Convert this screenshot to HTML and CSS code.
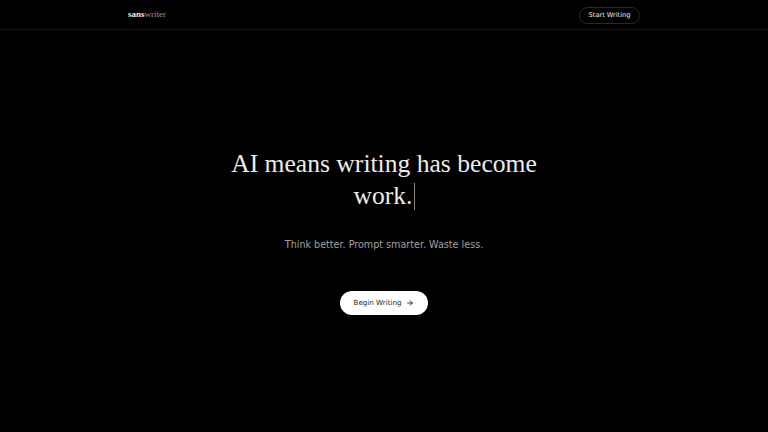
FILE: index.html
```html
<!DOCTYPE html>
<html lang="en">
<head>
<meta charset="utf-8">
<title>sanswriter</title>
<link rel="stylesheet" href="styles.css">
</head>
<body>
<div class="page">
  <header class="header">
    <div class="header-inner">
      <a class="logo" href="#"><span class="logo-bold">sans</span><span class="logo-light">writer</span></a>
      <a class="btn-outline" href="#">Start Writing</a>
    </div>
  </header>
  <main class="hero">
    <h1 class="headline">AI means writing has become work.<span class="cursor"></span></h1>
    <p class="subtitle">Think better. Prompt smarter. Waste less.</p>
    <a class="btn-primary" href="#">Begin Writing
      <svg class="arrow" viewBox="0 0 24 24" width="8" height="8" fill="none" stroke="currentColor" stroke-width="2.6" stroke-linecap="round" stroke-linejoin="round"><path d="M5 12h14"/><path d="M12 5l7 7-7 7"/></svg>
    </a>
  </main>
</div>
</body>
</html>
```
FILE: styles.css
```css
* { box-sizing: border-box; }
html, body { margin: 0; padding: 0; background: #000; }
body { font-family: "DejaVu Sans", sans-serif; color: #e8e8e8; }
a { text-decoration: none; }
.page { height: 432px; display: flex; flex-direction: column; }
.header { height: 30px; border-bottom: 1px solid #121212; flex: none; }
.header-inner {
  width: 512px; margin: 0 auto; height: 100%;
  display: flex; align-items: center; justify-content: space-between;
}
.logo { font-family: "Liberation Serif", serif; font-size: 9px; line-height: 1; }
.logo-bold { font-weight: 700; color: #e6e6e6; }
.logo-light { color: #9a9a9a; }
.btn-outline {
  display: flex; align-items: center; justify-content: center;
  width: 61px; height: 17px; border: 1px solid #2a2a2a; border-radius: 9px;
  color: #f0f0f0; font-size: 6.6px; margin-top: 1px;
}
.hero {
  flex: 1; display: flex; flex-direction: column; align-items: center; justify-content: center;
  padding-bottom: 0;
}
.headline {
  font-family: "Liberation Serif", serif; font-weight: 400; font-size: 25.6px; line-height: 32px;
  max-width: 340px; text-align: center; margin: 0; color: #ececec;
}
.cursor {
  display: inline-block; width: 1px; height: 27px; background: #8a8a8a;
  vertical-align: -6px; margin-left: 1px;
}
.subtitle { font-size: 9.6px; color: #a0a0a0; margin: 26px 0 0; line-height: 14px; }
.btn-primary {
  margin-top: 39px; display: flex; align-items: center; gap: 5px; justify-content: center;
  width: 88px; height: 24px; border-radius: 12px; background: #fff; color: #222;
  font-size: 7.1px; font-weight: 400;
}
.arrow { display: block; }
```
